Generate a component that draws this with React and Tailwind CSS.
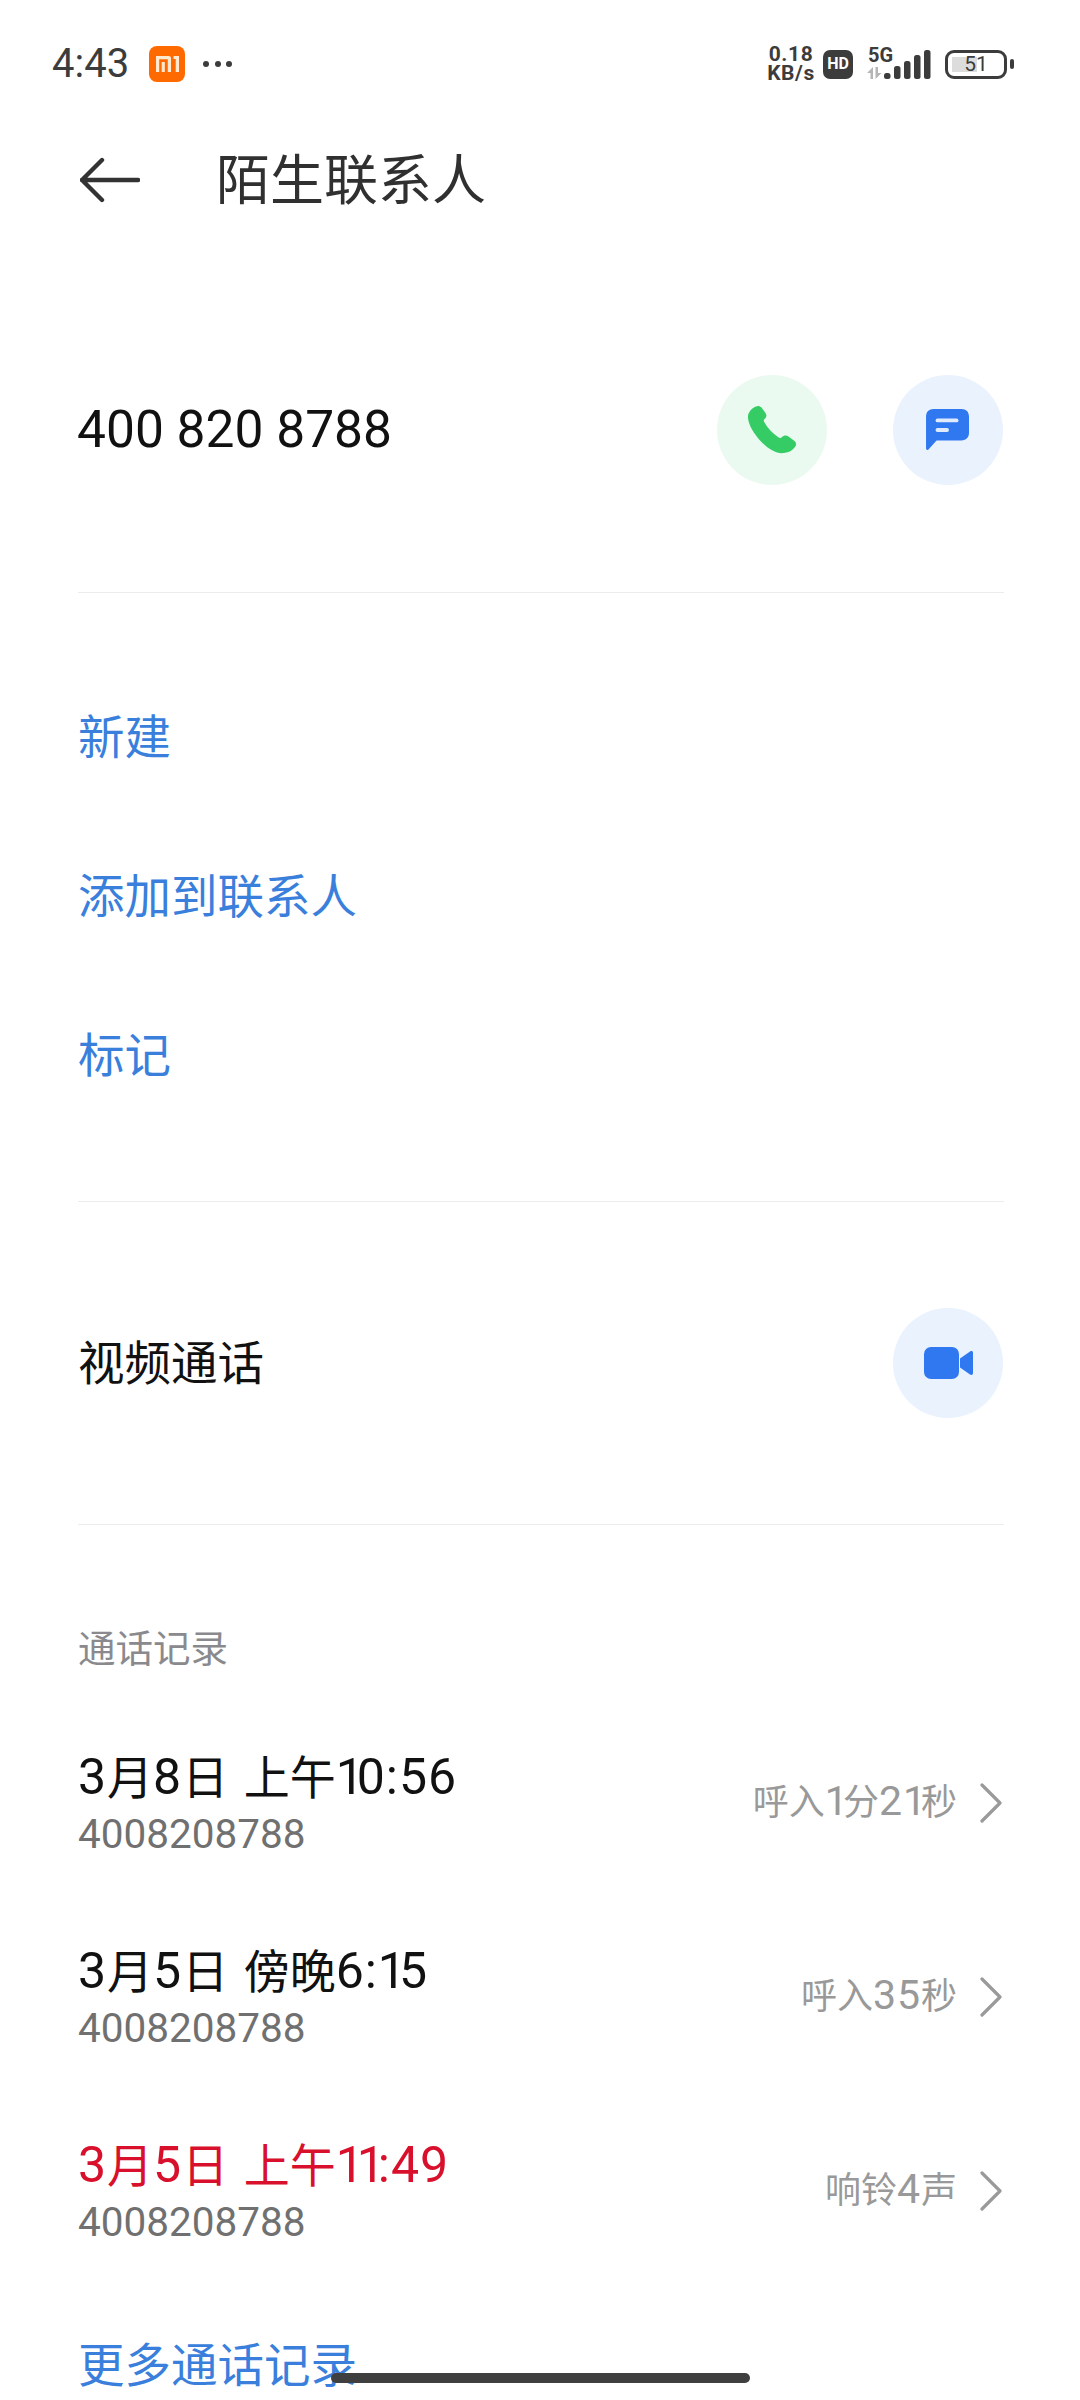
const FONT = 'font-["Roboto","Noto_Sans_CJK_SC",sans-serif]';

function Chevron() {
  return (
    <svg width="24" height="40" viewBox="0 0 24 40" fill="none" className="shrink-0">
      <path d="M3 2 L21 20 L3 38" stroke="#9a9a9a" strokeWidth="3.2" strokeLinecap="round" strokeLinejoin="round" />
    </svg>
  );
}

function Circle({ bg, children }) {
  return <div className={`w-[110px] h-[110px] rounded-full flex items-center justify-center ${bg}`}>{children}</div>;
}

function Mixed({ text, digit, one, cjk }) {
  return text.split(/(1|[02-9:]+)/).filter(Boolean).map((part, i) => (
    <span key={i} className={part === "1" ? one : /^[0-9:]+$/.test(part) ? digit : cjk}>{part}</span>
  ));
}

function StatusBar() {
  return (
    <div className="h-[128px] pl-[52px] pr-[66px] flex items-center justify-between">
      <div className="flex items-center">
        <span className="text-[40px] leading-none text-[#3c3c3c]">4:43</span>
        <div className="ml-[20px] w-[36px] h-[36px] rounded-[8px] bg-[#ff6a00] flex items-center justify-center">
          <svg width="23" height="16" viewBox="0 0 23 16">
            <path d="M0 0H12.5C14.5 0 15 1 15 2.5V16H11.8V3.2H3.2V16H0Z M5.7 6H8.8V16H5.7Z M17.5 0H23V16H19.7V3H17.5Z" fill="#ffe9cf" />
          </svg>
        </div>
        <div className="ml-[18px] flex gap-[5.5px]">
          <span className="w-[6px] h-[6px] rounded-full bg-[#3c3c3c]" />
          <span className="w-[6px] h-[6px] rounded-full bg-[#3c3c3c]" />
          <span className="w-[6px] h-[6px] rounded-full bg-[#3c3c3c]" />
        </div>
      </div>
      <div className="flex items-center">
        <div className="flex flex-col items-center text-[#3c3c3c] font-bold text-[21px] tracking-[0.6px] leading-[19px] w-[48px]">
          <span>0.18</span>
          <span>KB/s</span>
        </div>
        <div className="ml-[8px] w-[30px] h-[29px] rounded-[7px] bg-[#3c3c3c] text-white text-[16px] font-bold leading-none flex items-center justify-center">HD</div>
        <div className="ml-[14px] relative w-[65px] h-[32px]">
          <span className="absolute left-[1px] top-[-3px] text-[20px] font-bold leading-none text-[#3c3c3c]">5G</span>
          <svg width="65" height="32" viewBox="0 0 65 32" className="absolute left-0 top-0">
            <path d="M0 25L6 19V31H3.500V25Z M8.500 19H11V25H14.500L8.500 31Z" fill="#b5b5b5" />
            <rect x="17" y="25" width="6.500" height="6" rx="2.500" fill="#3c3c3c" />
            <rect x="27" y="18" width="6.500" height="13" rx="2.500" fill="#3c3c3c" />
            <rect x="37" y="13" width="6.500" height="18" rx="2.500" fill="#3c3c3c" />
            <rect x="47" y="7" width="6.500" height="24" rx="2.500" fill="#3c3c3c" />
            <rect x="57" y="2" width="6.500" height="29" rx="2.500" fill="#3c3c3c" />
          </svg>
        </div>
        <div className="ml-[13px] relative w-[62px] h-[29px] rounded-[9px] border-[3px] border-[#3c3c3c] flex items-center justify-center">
          <div className="absolute left-[4px] top-[4px] bottom-[4px] w-[25px] bg-[#dcdcdc]" />
          <span className="relative text-[21px] leading-none text-[#3c3c3c]">51</span>
        </div>
        <div className="ml-[3px] w-[4px] h-[10px] rounded-[2px] bg-[#3c3c3c]" />
      </div>
    </div>
  );
}

function CallRow({ title, red, sub, right }) {
  return (
    <div className="h-[194px] pl-[78px] pr-[77px] flex items-center justify-between">
      <div>
        <div className={`leading-[50px] [word-spacing:4px] ${red ? "text-[#d8102c]" : "text-[#111111]"}`}>
          <Mixed text={title} digit="text-[50px] tracking-[1px]" one="text-[50px] tracking-[-7px]" cjk="text-[46px]" />
        </div>
        <div className="text-[40.500px] leading-[40px] text-[#707070]">{sub}</div>
      </div>
      <div className="flex items-center gap-[22px]">
        <span className="leading-none text-[#999999] pb-[3px]">
          <Mixed text={right} digit="text-[41px] tracking-[1px]" one="text-[41px] tracking-[-5px]" cjk="text-[36px]" />
        </span>
        <Chevron />
      </div>
    </div>
  );
}

export default function App() {
  return (
    <div className={`relative h-[2400px] w-[1080px] overflow-hidden bg-white ${FONT}`}>
      <StatusBar />

      <div className="h-[104px] pl-[80px] flex items-center">
        <svg width="60" height="46" viewBox="0 0 60 46" fill="none">
          <path d="M2 23H58M22 3L2 23L22 43" stroke="#333333" strokeWidth="4.400" strokeLinecap="round" strokeLinejoin="round" />
        </svg>
        <span className="ml-[76px] pt-[4px] text-[54px] leading-none text-[#303030]">陌生联系人</span>
      </div>

      <div className="mt-[143px] pr-[77px] pl-[77px] flex items-center justify-between">
        <span className="text-[51.500px] leading-none text-[#111111]">400 820 8788</span>
        <div className="flex gap-[66px]">
          <Circle bg="bg-[#ebfaf0]">
            <svg width="50" height="50" viewBox="0 0 50 50">
              <path d="M9 1.500C11 .5 13 1 14.500 2.500L18.500 8C20 10 19.500 12.500 17.500 14C16.500 15 16.500 16 17.500 17.500C20.500 23 25 28 31 32C33 33.500 34 33 35 32C37 30 39.500 30 41.500 31.500L47.500 36C49.500 38 49.500 40 48 42C45.500 45.500 42 47.500 37 48C30 49 21.500 44.500 14 36.500C6.500 28.500 1.500 19.500 1 13C.5 8 4 3.500 9 1.500Z" fill="#35cc66" />
            </svg>
          </Circle>
          <Circle bg="bg-[#eaf2fe]">
            <svg width="44" height="42" viewBox="0 0 46 44">
              <path d="M8 0H37C42 0 45 3 45 8V25C45 30 42 33 37 33H11L3 42C2 43.500 0 43 0 41V8C0 3 3 0 8 0Z" fill="#3078f0" />
              <rect x="10" y="10" width="24" height="4" rx="2" fill="#dfeafd" />
              <rect x="10" y="20" width="14" height="4" rx="2" fill="#dfeafd" />
            </svg>
          </Circle>
        </div>
      </div>

      <div className="mt-[107px] mx-[78px] w-[926px] h-[1px] bg-[#ececec]" />

      <div className="mt-[66px] pl-[78px] text-[46.500px] text-[#3a7fdc]">
        <div className="h-[159px] leading-[159px]">新建</div>
        <div className="h-[159px] leading-[159px]">添加到联系人</div>
        <div className="h-[159px] leading-[159px]">标记</div>
      </div>

      <div className="mt-[65px] mx-[78px] w-[926px] h-[1px] bg-[#ececec]" />

      <div className="mt-[106px] pl-[78px] pr-[77px] flex items-center justify-between">
        <span className="pt-[2px] text-[46.500px] leading-none text-[#111111]">视频通话</span>
        <Circle bg="bg-[#eaf2fe]">
          <svg width="49" height="32" viewBox="0 0 49 32">
            <rect x="0" y="0" width="35" height="32" rx="7" fill="#3078f0" />
            <path d="M36 11.500L46 4.500C47.500 3.500 49 4 49 6V26C49 28 47.500 28.500 46 27.500L36 20.500Z" fill="#3078f0" />
          </svg>
        </Circle>
      </div>

      <div className="mt-[106px] mx-[78px] w-[926px] h-[1px] bg-[#ececec]" />

      <div className="mt-[101px] pl-[78px] text-[37.500px] leading-[46px] text-[#8a8a8e]">通话记录</div>

      <div className="mt-[34px]">
        <CallRow title="3月8日 上午10:56" sub="4008208788" right="呼入1分21秒" />
        <CallRow title="3月5日 傍晚6:15" sub="4008208788" right="呼入35秒" />
        <CallRow title="3月5日 上午11:49" red sub="4008208788" right="响铃4声" />
      </div>

      <div className="pl-[78px] text-[46.500px] leading-[60px] text-[#3a7fdc] mt-[48px]">更多通话记录</div>

      <div className="absolute left-[331px] top-[2373px] w-[419px] h-[10px] rounded-full bg-[#3f3f3f]" />
    </div>
  );
}
